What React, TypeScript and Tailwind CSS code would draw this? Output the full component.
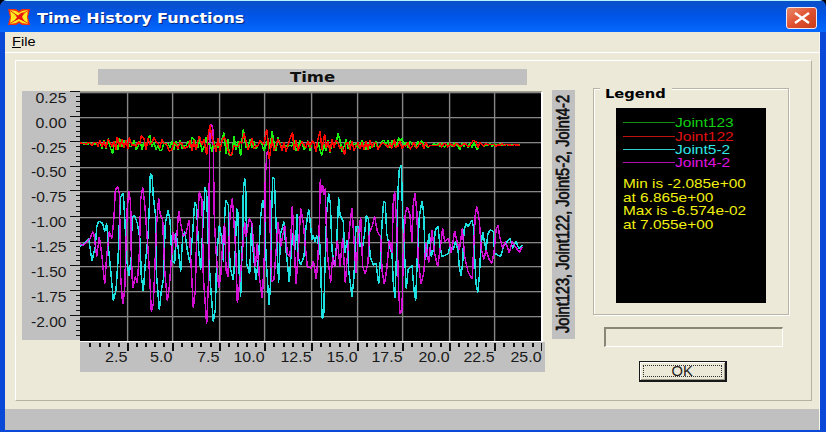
import clsx from "clsx";

type Point = [number, number];

// Plot units: three per pixel, origin at the left edge of the plot.
const JOINT_4_2 =
  "0,462 10,465 20,455 30,445 38,425 42,435 50,500 58,440 66,500 74,583 80,500 88,425 96,445 102,380 106,300 113,290 118,310 120,430 122,560 128,643 134,600 138,460 142,350 147,303 152,340 154,500 158,595 166,560 172,578 178,490 182,330 188,292 194,340 200,420 208,540 214,665 220,640 226,500 230,400 236,325 240,370 248,390 254,540 262,632 268,590 276,480 280,425 288,470 296,362 302,400 310,440 318,430 327,390 332,500 340,655 346,600 350,440 358,305 366,330 370,560 380,703 386,560 388,250 390,105 395,105 399,120 403,390 408,480 416,593 422,560 430,430 434,400 438,540 444,560 450,370 457,325 462,400 468,500 472,640 " +
  "478,590 486,500 494,395 498,440 508,385 516,400 522,480 526,530 532,460 538,560 547,625 553,500 556,260 561,185 568,200 570,400 575,575 582,570 590,460 594,395 602,470 614,405 622,490 630,500 637,347 642,450 648,582 654,500 662,355 670,400 676,470 682,530 694,535 700,512 709,567 714,500 718,400 721,268 724,310 728,285 731,315 736,295 738,380 742,490 752,578 758,500 764,530 772,450 780,530 788,445 796,578 802,500 810,400 816,353 " +
  "824,480 828,550 834,450 842,380 848,530 856,552 864,520 868,430 876,410 884,380 892,425 902,440 906,540 913,583 920,540 928,450 936,490 940,330 944,303 950,400 956,600 960,672 966,660 970,480 976,370 982,352 990,375 996,455 1000,340 1005,310 1011,370 1014,500 1023,583 1031,550 1038,460 1046,520 1056,420 1064,490 1073,530 1080,480 1088,415 1094,455 1106,445 1114,490 1124,422 1130,450 1138,480 1147,415 1154,500 1164,545 1177,568 1182,450 1186,370 1191,350 1198,390 1204,480 1212,508 1218,480 1226,505 1235,520 1242,490 1248,420 1254,405 1260,445 1268,475 1276,455 1288,488 1296,455 1306,470 1318,487 1327,470";

const JOINT_5_2 =
  "0,468 14,460 26,445 36,513 46,470 50,410 56,393 68,400 74,425 80,400 86,480 92,540 100,632 108,600 114,510 118,400 122,320 130,310 135,400 140,510 147,558 154,500 156,380 164,377 172,400 180,450 184,560 190,603 196,520 204,440 208,350 211,252 216,255 220,320 226,370 230,560 238,660 244,600 250,570 256,400 264,360 270,390 276,510 284,520 288,430 294,470 302,545 308,440 314,425 322,480 330,520 338,430 344,335 350,350 356,480 362,540 368,420 375,292 380,310 386,500 392,590 400,695 406,660 410,500 418,405 426,450 430,515 433,400 437,330 445,345 450,530 460,570 466,480 470,355 474,370 478,560 482,620 " +
  "488,430 490,300 494,265 498,310 500,520 509,553 515,400 520,490 528,570 536,500 542,380 548,330 554,360 558,500 567,645 572,580 574,400 578,262 583,265 588,400 596,578 602,430 612,395 618,480 628,577 634,480 638,430 646,480 651,372 654,500 662,525 672,500 678,410 686,357 691,400 696,450 700,435 705,455 710,435 714,462 718,435 722,520 726,685 731,680 734,560 740,370 746,310 751,340 756,480 764,530 770,460 776,322 780,375 790,395 794,490 802,450 806,540 816,620 822,560 828,410 " +
  "836,410 840,470 848,470 854,430 859,377 866,390 870,500 880,525 888,520 896,582 902,500 906,400 911,333 916,340 920,430 928,470 936,490 940,580 945,625 950,480 954,300 958,235 964,225 968,380 974,500 979,597 984,540 996,525 1002,600 1007,633 1012,500 1018,380 1026,332 1031,370 1036,510 1048,430 1054,500 1060,480 1066,420 1074,408 1080,470 1086,500 1104,492 1110,470 1120,480 1126,455 1134,480 1138,530 1143,557 1148,520 1152,420 1158,400 1164,410 1170,400 1176,390 1180,410 1184,500 1188,580 1193,608 1198,560 1202,480 1208,425 1218,480 1224,430 1232,420 1240,425 1244,490 1262,500 1270,470 1278,460 1290,445 1298,475 1308,455 1316,475 1327,465";

// half height of the two quiet joints along the plot
const ENVELOPE: Point[] = [
  [0, 2], [30, 5], [60, 18], [100, 26], [140, 22], [200, 26], [240, 24], [300, 20],
  [340, 30], [420, 30], [450, 38], [500, 28], [560, 36], [620, 26], [700, 24],
  [730, 32], [800, 28], [850, 20], [960, 17], [1020, 15], [1060, 8], [1120, 8],
  [1190, 13], [1220, 8], [1270, 4], [1327, 2],
];

const PEAKS_123: Point[] = [
  [98, 192], [118, 144], [209, 135], [240, 182], [344, 150], [432, 128], [448, 197],
  [490, 118], [482, 198], [576, 124], [726, 196], [774, 131], [912, 151], [956, 143],
  [965, 145], [1024, 152], [1140, 179], [1192, 180],
];

const PEAKS_122: Point[] = [
  [112, 140], [148, 143], [184, 137], [222, 142], [268, 184], [358, 138], [380, 196],
  [390, 104], [433, 140], [452, 197], [492, 130], [560, 117], [568, 208], [638, 128],
  [720, 124], [734, 132], [794, 195], [943, 148], [1180, 151],
];

function envelopeAt(x: number) {
  const i = Math.max(1, ENVELOPE.findIndex(([ex]) => ex >= x));
  const [x0, y0] = ENVELOPE[i - 1];
  const [x1, y1] = ENVELOPE[i];
  return y0 + ((x - x0) / (x1 - x0)) * (y1 - y0);
}

function quietJoint(seed: number, peaks: Point[]) {
  const points: Point[] = [...peaks];
  let s = seed;
  let sign = 1;
  for (let x = 0; x <= 1325; x += 6) {
    s = (s * 16807) % 2147483647;
    const r = s / 2147483647;
    if (r > 0.35) sign = -sign;
    if (peaks.some(([px]) => Math.abs(px - x) < 4)) continue;
    const center = 160 + Math.min(5, x / 50);
    points.push([x, center + sign * r * envelopeAt(x) * 0.8]);
  }
  points.sort((a, b) => a[0] - b[0]);
  return points.map(([x, y]) => `${x},${y.toFixed(1)}`).join(" ");
}

const JOINT_123 = quietJoint(4711, PEAKS_123);
const JOINT_122 = quietJoint(90210, PEAKS_122);

const GRID_X = [127, 172, 219, 264, 311, 357, 402, 449, 494, 541];
const GRID_Y = [92, 117, 142, 167, 191, 217, 242, 266, 291, 316];
const Y_LABELS = ["0.25", "0.00", "-0.25", "-0.50", "-0.75", "-1.00", "-1.25", "-1.50", "-1.75", "-2.00"];
const X_LABELS = ["2.5", "5.0", "7.5", "10.0", "12.5", "15.0", "17.5", "20.0", "22.5", "25.0"];

const LEGEND = [
  { name: "Joint123", text: "text-[#10d010]", line: "bg-[#109010]", height: "h-[13px]" },
  { name: "Joint122", text: "text-[#e01010]", line: "bg-[#c01010]", height: "h-[14px]" },
  { name: "Joint5-2", text: "text-[#30e8e8]", line: "bg-[#30d0d0]", height: "h-[13px]" },
  { name: "Joint4-2", text: "text-[#e010e0]", line: "bg-[#b010b0]", height: "h-[13px]" },
];

const STATS = ["Min is -2.085e+00", "at 6.865e+00", "Max is -6.574e-02", "at 7.055e+00"];

function AppIcon() {
  return (
    <svg className="h-[16px] w-[22px]" viewBox="0 0 22 16">
      <path d="M0 0H8L11 2L14 0H22L20 8L22 16H14L11 14L8 16H0L2 8Z" fill="#f03010" />
      <path d="M2 1L8 2L11 4L14 2L20 1L19 8L20 15L14 14L11 12L8 14L2 15L3 8Z" fill="#ffe820" />
      <path d="M6 4L10 6.5L13 4L17 3L14 8L17 13L11 10L5 13L9 8.5Z" fill="#e81810" />
      <path d="M2 1.500L7 5M20 1.500L15 5M2 14.500L6 12M20 14.500L16 12" stroke="#e84010" />
    </svg>
  );
}

function TitleBar() {
  return (
    <header className="flex h-8 items-center border-t border-[#b8f4ff] bg-linear-to-b from-[#0a50c8] via-[#0054e6] via-45% to-[#0668ff] pl-2 pr-[9px]">
      <AppIcon />
      <h1 className="ml-[7px] mt-[3px] w-[208px] origin-left scale-x-[1.14] whitespace-nowrap font-['DejaVu_Sans'] text-[14px] font-bold leading-none text-white [text-shadow:1px_1px_0_#0a2a80]">
        Time History Functions
      </h1>
      <button className="ml-auto mt-[3px] flex h-[22px] w-[31px] items-center justify-center rounded-[3px] border border-[#f4e8f0] bg-linear-to-br from-[#e88868] via-[#e05030] to-[#c83c18]">
        <svg className="h-3 w-4" viewBox="0 0 16 12">
          <path d="M1 1L15 11M15 1L1 11" stroke="white" strokeWidth="2.4" />
        </svg>
      </button>
    </header>
  );
}

function YAxis() {
  return (
    <svg className="h-[251px] w-[59px] shrink-0" viewBox="22 91 59 251">
      <rect x="22" y="91" width="58" height="249" fill="#c0c0c0" />
      <g fill="#101010" shapeRendering="crispEdges">
        {GRID_Y.map((y, i) => (
          <g key={y}>
            <rect x="70" y={y - 1} width="10" height="1" />
            {[1, 2, 3, 4].map((n) => (
              <rect key={n} x="76" y={y - 1 + Math.round((n * ((GRID_Y[i + 1] ?? 341) - y)) / 5)} width="5" height="1" />
            ))}
          </g>
        ))}
      </g>
      <g fill="#1a1a1a" fontFamily="Liberation Sans" fontSize="14">
        {Y_LABELS.map((label, i) => (
          <text
            key={label}
            x={label.length > 4 ? 31 : 35.5}
            y={102.8 + i * 24.87}
            textLength={label.length > 4 ? 35.5 : 31}
            lengthAdjust="spacingAndGlyphs"
          >
            {label}
          </text>
        ))}
      </g>
    </svg>
  );
}

function XAxis() {
  return (
    <svg className="h-[30px] w-[465px] bg-[#c0c0c0]" viewBox="80 342 465 30">
      <g fill="#101010" shapeRendering="crispEdges">
        {GRID_X.map((x, i) => {
          const prev = GRID_X[i - 1] ?? 80;
          return (
            <g key={x}>
              {[1, 2, 3, 4].map((n) => (
                <rect key={n} x={prev + Math.round((n * (x - prev)) / 5)} y="343" width="2" height="4" />
              ))}
              <rect x={x} y="343" width={i === 9 ? 1 : 2} height="8" />
            </g>
          );
        })}
      </g>
      <g fill="#1a1a1a" fontFamily="Liberation Sans" fontSize="14">
        {X_LABELS.map((label, i) => {
          const width = label.length > 3 ? 31 : 22.5;
          return (
            <text key={label} x={GRID_X[i] + 0.5 - width} y="362.3" textLength={width} lengthAdjust="spacingAndGlyphs">
              {label}
            </text>
          );
        })}
      </g>
    </svg>
  );
}

function Plot() {
  return (
    <svg className="h-[249px] w-[461px] bg-black" viewBox="80 92 461 249">
      <g fill="#868686">
        {GRID_Y.map((y) => (
          <rect key={y} x="80" y={y} width="461" height="1.3" />
        ))}
        {GRID_X.slice(0, 9).map((x) => (
          <rect key={x} x={x - 0.1} y="92" width="1.4" height="249" />
        ))}
      </g>
      <g
        transform="translate(80 90) scale(.33333)"
        fill="none"
        strokeLinejoin="bevel"
        strokeWidth="4.5"
        shapeRendering="crispEdges"
      >
        <polyline points={JOINT_5_2} stroke="#20f4f4" strokeOpacity=".92" />
        <polyline points={JOINT_4_2} stroke="#f410f4" strokeOpacity=".86" />
        <polyline points={JOINT_123} stroke="#18f010" />
        <polyline points={JOINT_122} stroke="#ff0800" />
      </g>
    </svg>
  );
}

function Chart() {
  return (
    <section className="w-[524px] shrink-0">
      <div className="ml-[76px] flex h-4 w-[429px] items-center justify-center bg-[#c0c0c0] pt-px">
        <span className="scale-x-[1.22] font-['DejaVu_Sans'] text-[13.5px] font-bold leading-none text-[#101010]">Time</span>
      </div>
      <div className="mt-[6px] flex h-[251px]">
        <YAxis />
        <div className="-ml-px h-[251px] w-[463px] border-b border-r-2 border-t border-b-white border-r-white border-t-[#a0a090]">
          <Plot />
        </div>
      </div>
      <div className="ml-[58px]">
        <XAxis />
      </div>
    </section>
  );
}

function SeriesTitle() {
  return (
    <svg className="mt-[21px] h-[249px] w-[23px] shrink-0 overflow-visible bg-[#c0c0c0]" viewBox="0 0 23 249">
      <text
        transform="translate(17 243) rotate(-90)"
        fontFamily="Liberation Sans"
        fontSize="18.5"
        textLength="238"
        lengthAdjust="spacingAndGlyphs"
        fill="#101010"
        stroke="#101010"
        strokeWidth=".7"
      >
        Joint123, Joint122, Joint5-2, Joint4-2
      </text>
    </svg>
  );
}

function Legend() {
  return (
    <fieldset className="-ml-[11px] h-[235px] w-[196px] border border-[#b8b5a4] pl-[22px] shadow-[1px_1px_0_#fff,inset_1px_1px_0_#fff]">
      <legend className="-ml-[16px] h-[16px] w-[72px] bg-[#ece9d8] pl-[5px]">
        <span className="inline-block origin-left scale-x-[1.13] font-['DejaVu_Sans'] text-[13px] font-bold leading-[14px]">
          Legend
        </span>
      </legend>
      <div className="mt-[12px] h-[195px] w-[150px] bg-black pl-[7px] pt-[8px] font-['Liberation_Sans'] text-[13.5px]">
        {LEGEND.map((item) => (
          <div key={item.name} className={clsx("flex items-center", item.height)}>
            <i className={clsx("h-px w-[52px]", item.line)} />
            <span className={clsx("origin-left scale-x-[1.15] leading-[13px]", item.text)}>{item.name}</span>
          </div>
        ))}
        <div className="mt-[8px] text-[#f0f010]">
          {STATS.map((line) => (
            <p key={line} className="w-fit origin-left scale-x-[1.14] whitespace-nowrap leading-[13.7px]">
              {line}
            </p>
          ))}
        </div>
      </div>
    </fieldset>
  );
}

function SidePanel() {
  return (
    <aside className="ml-[29px] mt-[19px] w-[190px]">
      <Legend />
      <div className="mt-[12px] h-[20px] w-[179px] border-b border-l-2 border-r border-t-2 border-b-white border-l-[#8a8778] border-r-white border-t-[#8a8778]" />
      <button className="ml-[35px] mt-[14px] block h-[21px] w-[88px] border border-[#181818] border-b-2 border-r-2 bg-[#ece9d8] p-[3px] shadow-[inset_1px_1px_0_#fff,inset_-1px_-1px_0_#9c998a]">
        <span className="flex h-full items-center justify-center border border-dotted border-[#303030] font-['Liberation_Sans'] text-[14px] leading-none text-[#202020]">
          <span className="scale-x-[1.05]">OK</span>
        </span>
      </button>
    </aside>
  );
}

export default function App() {
  return (
    <div className="h-[432px] w-full bg-black">
      <div className="flex h-[432px] flex-col overflow-hidden rounded-t-[7px] bg-[#0a48d8]">
        <TitleBar />
        <main className="ml-[5px] mr-[6px] flex h-[398px] flex-col border-r border-[#f8f6ea] bg-[#ece9d8]">
          <nav className="h-[21px] shrink-0 border-b border-white pl-[7px] pt-[2px] font-['Liberation_Sans'] text-[13px] leading-[15px]">
            <span className="inline-block origin-left scale-x-[1.12]">
              <u>F</u>ile
            </span>
          </nav>
          <div className="ml-[10px] mt-[7px] flex h-[341px] w-[797px] shrink-0 border-b border-l border-r border-t border-b-[#b4b1a0] border-l-white border-r-[#b4b1a0] border-t-white pl-[6px]">
            <div className="mt-[8px] flex">
              <Chart />
              <div className="ml-[6px]">
                <SeriesTitle />
              </div>
            </div>
            <SidePanel />
          </div>
          <footer className="mt-auto h-[21px] bg-[#c0c0c0]" />
        </main>
      </div>
    </div>
  );
}
